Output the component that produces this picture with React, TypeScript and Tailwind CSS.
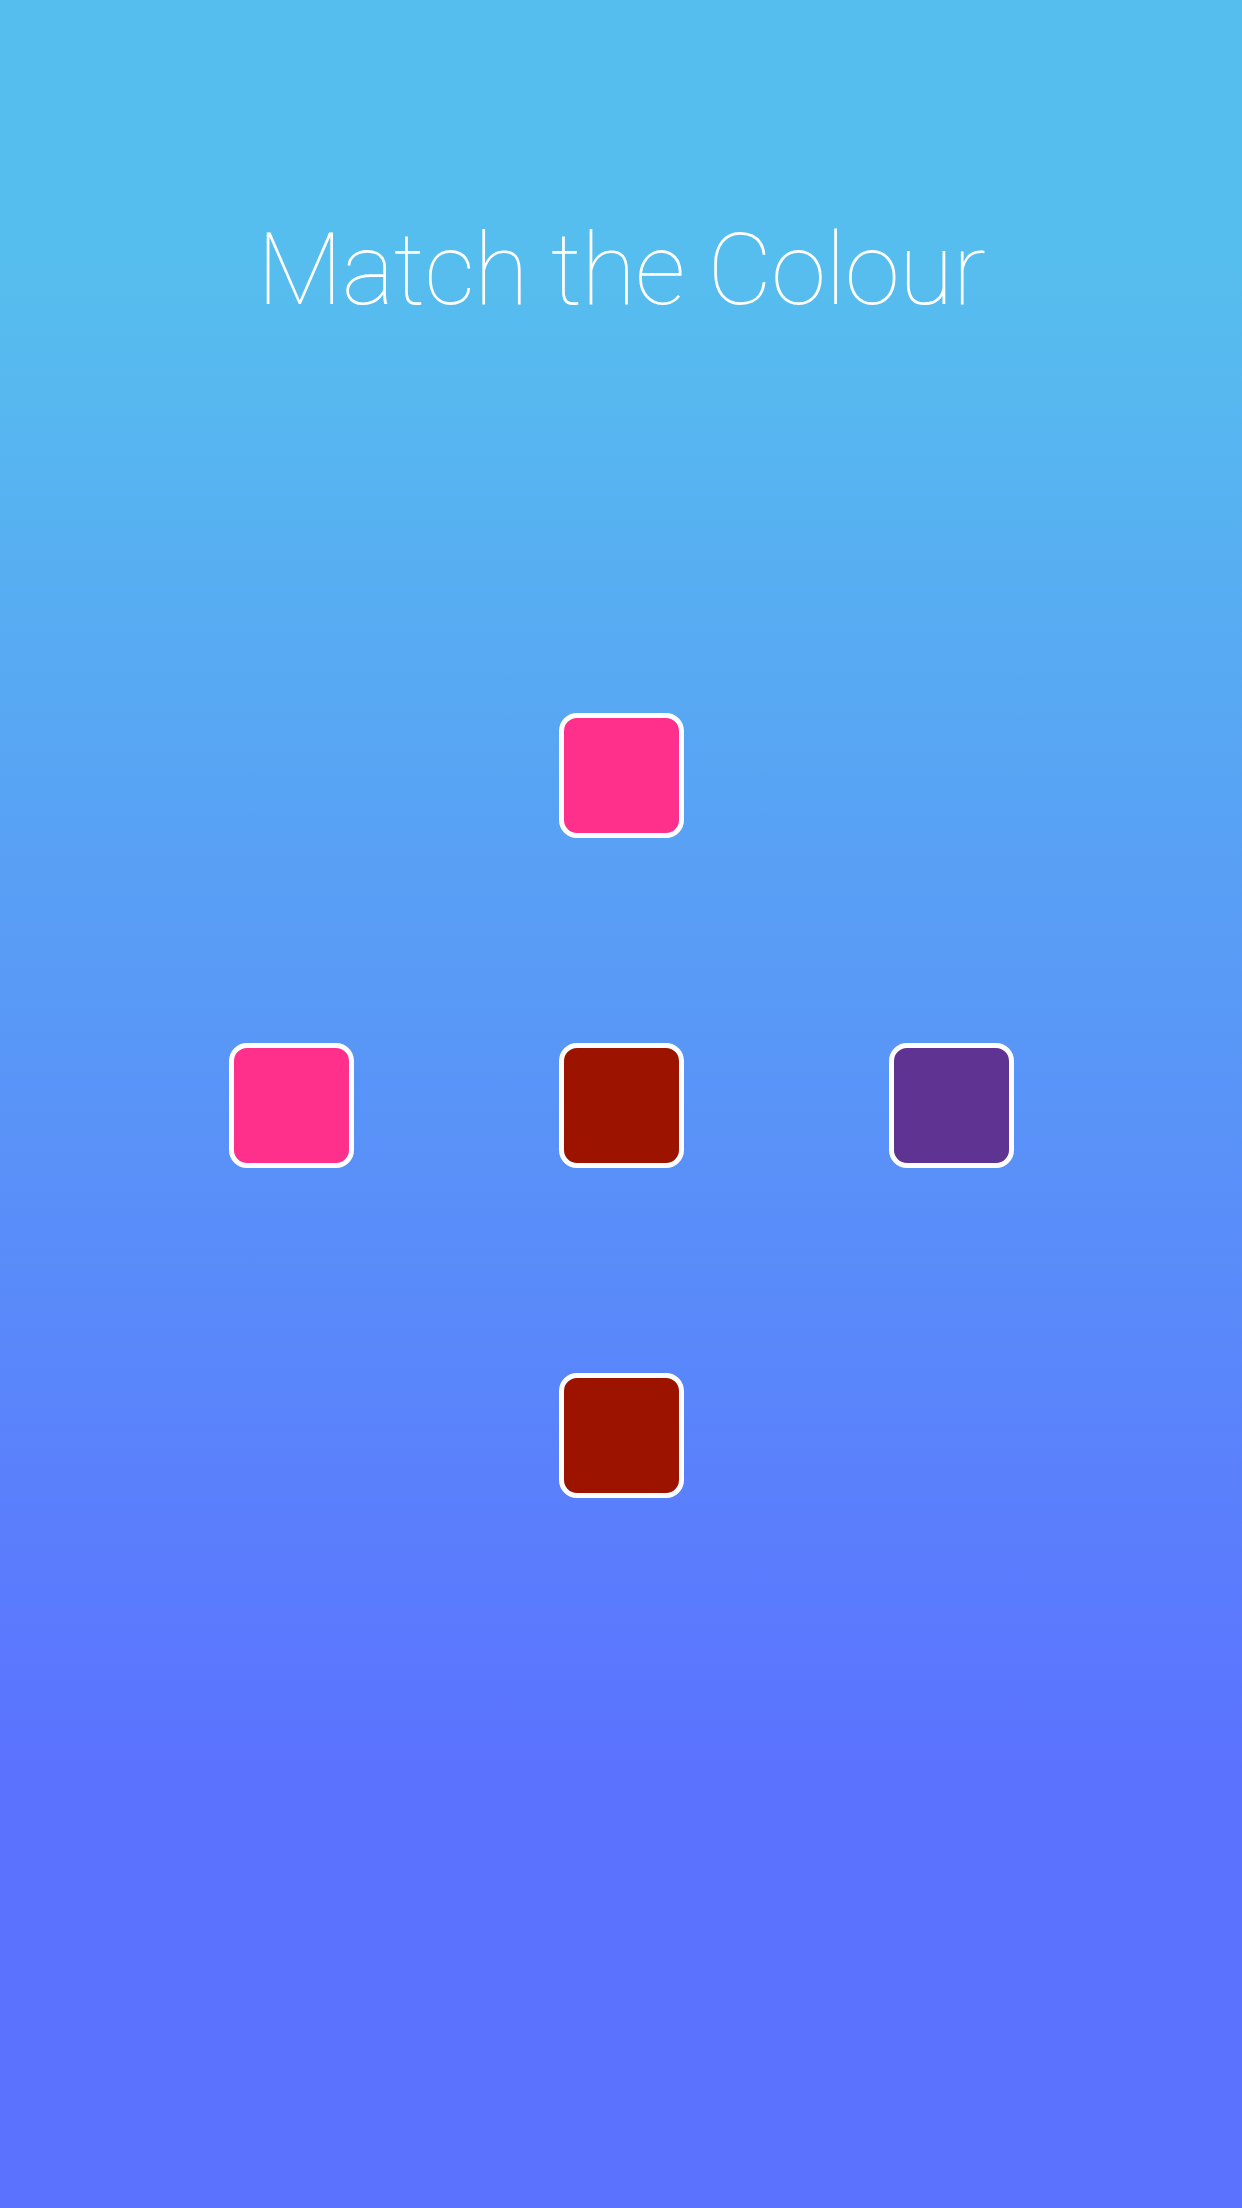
const cells: (string | null)[] = [
  null, "#ff2f8c", null,
  "#ff2f8c", "#9c1400", "#5e3391",
  null, "#9c1400", null,
];

function Tile({ color }: { color: string }) {
  return (
    <div
      className="w-[125px] h-[125px] rounded-[18px] border-[5px] border-white"
      style={{ backgroundColor: color }}
    />
  );
}

export default function App() {
  return (
    <div className="w-[1242px] h-[2208px] bg-[linear-gradient(180deg,#56beee_0%,#56beee_12%,#5b72ff_80%,#5b72ff_100%)] flex flex-col items-center">
      <h1 className="mt-[220px] text-[100px] leading-[100px] font-thin text-white tracking-[-1px] font-['Roboto','Inter',sans-serif]">
        Match the Colour
      </h1>

      {/* colour grid */}
      <div className="mt-[290px] w-[990px] grid grid-cols-3 auto-rows-[330px]">
        {cells.map((c, i) => (
          <div key={i} className="flex items-center justify-center">
            {c && <Tile color={c} />}
          </div>
        ))}
      </div>
    </div>
  );
}
